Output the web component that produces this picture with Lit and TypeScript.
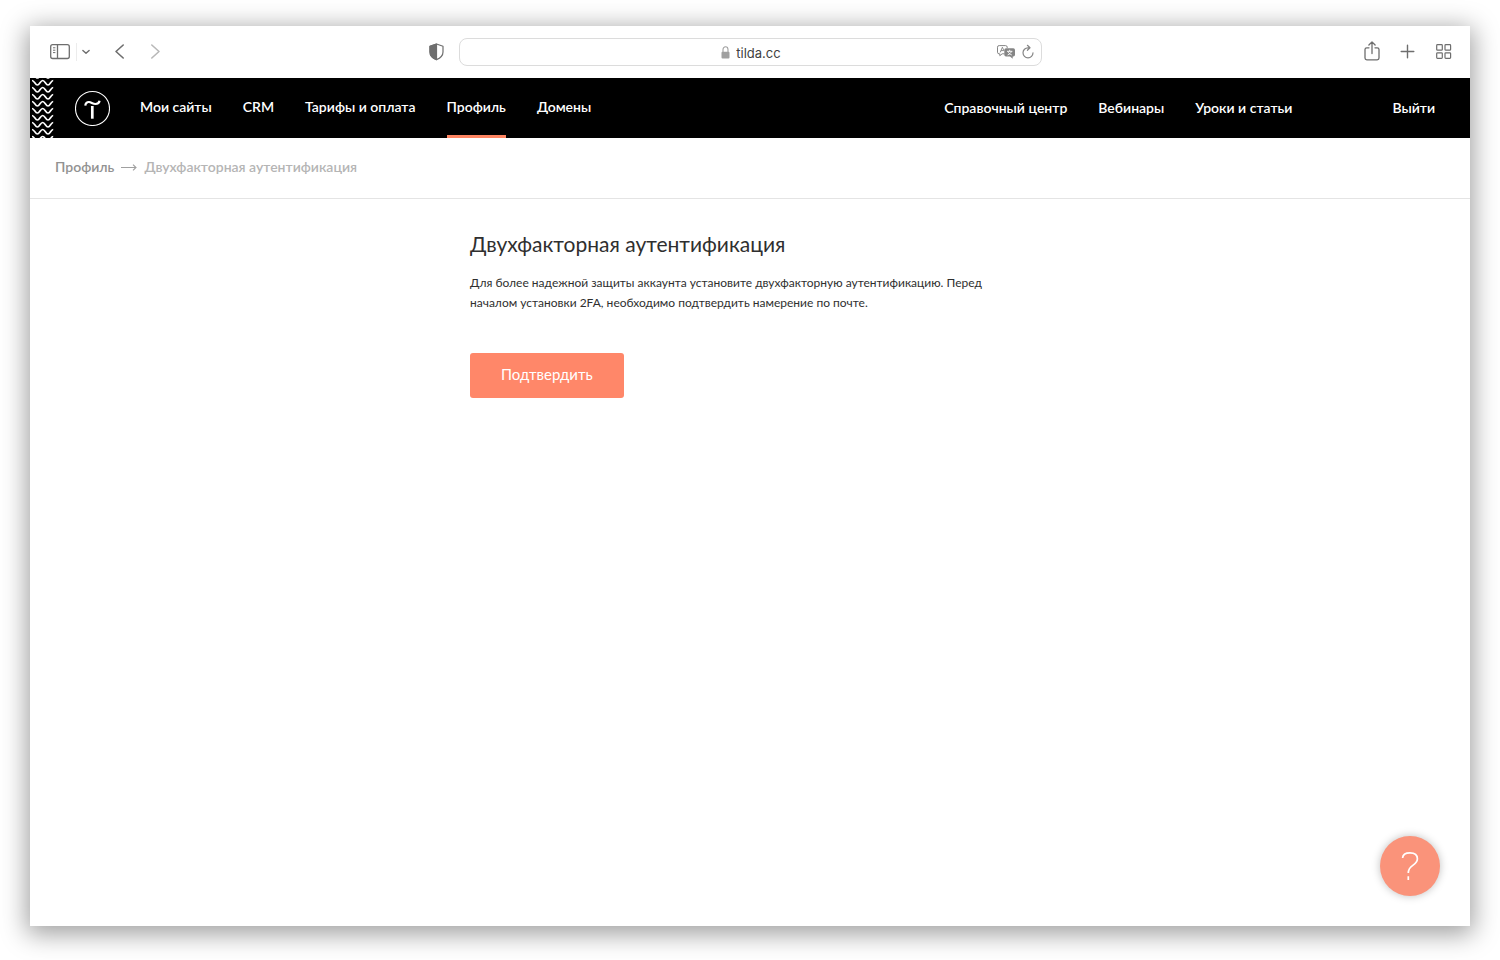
import { LitElement, html, css, svg } from "lit";
import { customElement } from "lit/decorators.js";

interface NavLink {
  label: string;
  active?: boolean;
}

const MAIN_LINKS: NavLink[] = [
  { label: "Мои сайты" },
  { label: "CRM" },
  { label: "Тарифы и оплата" },
  { label: "Профиль", active: true },
  { label: "Домены" },
];

const HELP_LINKS: NavLink[] = [
  { label: "Справочный центр" },
  { label: "Вебинары" },
  { label: "Уроки и статьи" },
];

@customElement("browser-bar")
export class BrowserBar extends LitElement {
  static styles = css`
    :host {
      display: block;
      color: #6e6e6e;
      background: #fff;
    }
    .bar {
      display: grid;
      grid-template-columns: 1fr minmax(0, 645px) 1fr;
      align-items: center;
      height: 52px;
      padding: 0 16px;
    }
    .group {
      display: flex;
      align-items: center;
    }
    .start {
      padding-left: 3px;
    }
    .end {
      justify-content: flex-end;
      gap: 16px;
    }
    .center {
      display: flex;
      align-items: center;
      gap: 13px;
      padding-right: 31px;
    }
    button {
      display: flex;
      padding: 0;
      border: 0;
      background: none;
      color: inherit;
    }
    svg {
      display: block;
      fill: none;
      stroke: currentColor;
    }
    .divider {
      width: 1px;
      height: 18px;
      margin: 0 5px;
      background: #ececec;
    }
    .back {
      margin-left: 20px;
    }
    .forward {
      margin-left: 15px;
      color: #b8b8b8;
    }
    .address {
      display: flex;
      flex: 1;
      align-items: center;
      box-sizing: border-box;
      height: 28px;
      padding: 0 6px;
      border: 1px solid #dcdcdc;
      border-radius: 8px;
    }
    .lock {
      margin-left: auto;
      color: #a0a0a0;
    }
    .url {
      field-sizing: content;
      margin: 0 auto 0 6px;
      padding: 1px 0 0;
      border: 0;
      outline: 0;
      background: none;
      color: #3f3f3f;
      font: 13px/16px Inter, sans-serif;
    }
    .spacer {
      width: 40px;
    }
    .tools {
      display: flex;
      align-items: center;
      gap: 6px;
      color: #858585;
    }
  `;

  render() {
    return html`
      <div class="bar">
        <div class="group start">
          <button aria-label="Боковая панель">
            <svg width="22" height="18" viewBox="0 0 22 18" stroke-width="1.3">
              <rect x="1.7" y="1.7" width="18.6" height="13.8" rx="2" />
              <path d="M8.500 1.700v13.800" />
              <path d="M4 4.800h2.400M4 7.200h2.400M4 9.600h2.400" stroke-width="1" />
            </svg>
          </button>
          <span class="divider"></span>
          <button aria-label="Группы вкладок">
            <svg width="8" height="8" viewBox="0 0 8 8" stroke-width="1.4" stroke-linecap="round" stroke-linejoin="round">
              <path d="M.9 2.400 4 5.300 7.100 2.400" />
            </svg>
          </button>
          <button class="back" aria-label="Назад">
            <svg width="20" height="18" viewBox="0 0 20 18" stroke-width="1.6" stroke-linecap="round" stroke-linejoin="round">
              <path d="M13.200 2 6 8.500l7.200 6.500" />
            </svg>
          </button>
          <button class="forward" aria-label="Вперёд">
            <svg width="20" height="18" viewBox="0 0 20 18" stroke-width="1.6" stroke-linecap="round" stroke-linejoin="round">
              <path d="M6.800 2 14 8.500l-7.200 6.500" />
            </svg>
          </button>
        </div>
        <div class="center">
          <button aria-label="Отчёт о конфиденциальности">
            <svg width="18" height="18" viewBox="0 0 18 18" stroke-width="1.2" stroke-linejoin="round">
              <path d="M8.500 1 15 3.300v5.600c0 3.600-2.900 6.200-6.500 7.700-3.600-1.500-6.500-4.100-6.500-7.700V3.300z" />
              <path d="M8.500 1 2 3.300v5.600c0 3.600 2.900 6.200 6.500 7.700z" fill="currentColor" />
            </svg>
          </button>
          <div class="address">
            <span class="spacer"></span>
            <svg class="lock" width="9" height="14" viewBox="0 0 9 14">
              <rect x=".5" y="6.800" width="8" height="6.700" rx="1" fill="currentColor" stroke="none" />
              <path d="M2 7V4.500a2.500 2.800 0 0 1 5 0v2.500" stroke-width="1.100" />
            </svg>
            <input class="url" type="text" aria-label="Адрес" value="tilda.cc" />
            <div class="tools">
              <button aria-label="Перевести">
                <svg width="20" height="16" viewBox="0 0 20 16" stroke-linejoin="round">
                  <path d="M8.500 9.800H6.200L3.800 11.700V9.800H3.200A1.600 1.600 0 0 1 1.500 8.200V3.200A1.600 1.600 0 0 1 3.200 1.600h6.400A1.600 1.600 0 0 1 11.200 3.200v.8" />
                  <path d="M4.200 8.400 6.400 3.200 8 7M5 6.600h2.600" stroke-width=".9" />
                  <path d="M10 4.300h7.300A1.700 1.700 0 0 1 19 6v4.800a1.700 1.700 0 0 1-1.700 1.700h-.6v2.300l-2.700-2.300h-4A1.700 1.700 0 0 1 8.300 10.800V6A1.700 1.700 0 0 1 10 4.300z" fill="currentColor" stroke="none" />
                  <path d="M11 7.300h5.400M13.700 5.800v1.500M11.600 11c2-.8 3.300-2 3.800-3.600M12 7.500c.6 1.600 1.900 2.800 3.800 3.500" stroke="#fff" stroke-width=".9" />
                </svg>
              </button>
              <button aria-label="Обновить">
                <svg width="12" height="16" viewBox="0 0 12 16" stroke-width="1.200" stroke-linecap="round" stroke-linejoin="round">
                  <path d="M6 3.800a5 5 0 1 0 5 5M6 3.800h1.800M5.400 1.300l2.600 2.500-2.600 2.500" />
                </svg>
              </button>
            </div>
          </div>
        </div>
        <div class="group end">
          <button aria-label="Поделиться">
            <svg width="20" height="22" viewBox="0 0 20 22" stroke-width="1.300" stroke-linecap="round" stroke-linejoin="round">
              <path d="M7 6.800H4.800a1.800 1.800 0 0 0-1.800 1.800v8.400a1.800 1.800 0 0 0 1.800 1.800h10.400a1.800 1.800 0 0 0 1.800-1.800V8.600a1.800 1.800 0 0 0-1.800-1.800H13M10 12.600V1M6.900 4 10 .9l3.100 3.100" />
            </svg>
          </button>
          <button aria-label="Новая вкладка">
            <svg width="20" height="20" viewBox="0 0 20 20" stroke-width="1.400" stroke-linecap="round">
              <path d="M9.500 3.200v12.600M3.200 9.500h12.600" />
            </svg>
          </button>
          <button aria-label="Обзор вкладок">
            <svg width="20" height="20" viewBox="0 0 20 20" stroke-width="1.200">
              <rect x="2.700" y="2.600" width="5.600" height="5.600" rx=".8" />
              <rect x="11" y="2.600" width="5.600" height="5.600" rx=".8" />
              <rect x="2.700" y="10.800" width="5.600" height="5.600" rx=".8" />
              <rect x="11" y="10.800" width="5.600" height="5.600" rx=".8" />
            </svg>
          </button>
        </div>
      </div>
    `;
  }
}

@customElement("site-header")
export class SiteHeader extends LitElement {
  static styles = css`
    :host {
      display: block;
      background: #000;
      color: #fff;
    }
    .header {
      display: flex;
      align-items: stretch;
      height: 60px;
      padding-right: 35px;
      font-size: 14px;
      line-height: 20px;
      font-weight: 600;
      white-space: nowrap;
    }
    svg {
      display: block;
      fill: none;
      stroke: #fff;
    }
    .pattern {
      flex: none;
    }
    .logo {
      display: flex;
      align-items: center;
      margin: 0 30px 0 21px;
    }
    nav {
      display: flex;
      gap: 31px;
    }
    a {
      color: inherit;
      text-decoration: none;
    }
    .main a {
      box-sizing: border-box;
      height: 60px;
      padding-top: 19px;
      border-bottom: 3px solid transparent;
    }
    .main a.active {
      border-bottom-color: #ff8562;
    }
    .help {
      margin-left: auto;
    }
    .help a,
    .exit {
      padding-top: 20px;
    }
    .exit {
      margin-left: 100px;
    }
  `;

  private wave(y: number) {
    return svg`<path
      transform="translate(0 ${y})"
      d="M2 .5C4.300 .5 5.200 5 7.400 5S10.400 .5 12.700 .5 15.700 5 18 5 20.900 .5 23.200 .5"
    />`;
  }

  render() {
    const rows = Array.from({ length: 10 }, (_, i) => i * 7 - 5);
    return html`
      <header class="header">
        <svg class="pattern" width="24" height="60" viewBox="0 0 24 60" stroke-width="1.700">
          ${rows.map((y) => this.wave(y))}
        </svg>
        <a class="logo" href="#" aria-label="Tilda">
          <svg width="35" height="36" viewBox="0 0 35 36">
            <circle cx="17.500" cy="18.500" r="17" stroke-width="1.100" />
            <path d="M17.300 16v12.700" stroke-width="2.700" />
            <path d="M10.300 15.600c.2-2.400 1.800-3.800 3.700-3.600 2.300.3 3.900 2 6.500 2 2.300 0 3.700-1 4.100-3.200" stroke-width="2.200" />
          </svg>
        </a>
        <nav class="main">
          ${MAIN_LINKS.map((l) => html`<a href="#" class=${l.active ? "active" : ""}>${l.label}</a>`)}
        </nav>
        <nav class="help">
          ${HELP_LINKS.map((l) => html`<a href="#">${l.label}</a>`)}
        </nav>
        <a class="exit" href="#">Выйти</a>
      </header>
    `;
  }
}

@customElement("app-root")
export class AppRoot extends LitElement {
  static styles = css`
    :host {
      display: block;
      background: #fff;
      color: #2f2f2f;
      font-family: Lato, "Open Sans", sans-serif;
    }
    .stage {
      display: flex;
      box-sizing: border-box;
      min-height: 100vh;
      padding: 26px 30px 34px;
      overflow: hidden;
    }
    .window {
      position: relative;
      flex: 1;
      min-width: 0;
      background: #fff;
      box-shadow: 0 5px 24px 3px rgba(0, 0, 0, 0.38);
    }
    .crumbs {
      display: flex;
      align-items: center;
      gap: 7px;
      box-sizing: border-box;
      height: 61px;
      padding: 0 25px 2px;
      border-bottom: 1px solid #e4e4e4;
      color: #b5b5b5;
      font-size: 14px;
      line-height: 20px;
      font-weight: 600;
    }
    .crumbs a {
      color: #929292;
      text-decoration: none;
    }
    .crumbs svg {
      fill: none;
      stroke: #a0a0a0;
    }
    main {
      max-width: 560px;
      margin: 0 auto;
      padding: 29px 0 40px;
    }
    h1 {
      margin: 0 0 13px;
      font-size: 21px;
      line-height: 32px;
      font-weight: 400;
    }
    p {
      max-width: 540px;
      margin: 0 0 40px;
      font-size: 12px;
      line-height: 20px;
    }
    .confirm {
      height: 45px;
      padding: 0 31px 3px;
      border: 0;
      border-radius: 3px;
      background: #ff8769;
      color: #fff;
      font: inherit;
      font-size: 15px;
      line-height: 22px;
    }
    .ask {
      position: absolute;
      right: 30px;
      bottom: 30px;
      display: grid;
      place-items: center;
      width: 60px;
      height: 60px;
      padding: 0;
      border: 0;
      border-radius: 50%;
      background: #fa937a;
      box-shadow: 0 0 8px rgba(0, 0, 0, 0.25);
    }
    .ask svg {
      fill: none;
      stroke: #fff;
    }
  `;

  render() {
    return html`
      <div class="stage">
        <div class="window">
          <browser-bar></browser-bar>
          <site-header></site-header>
          <nav class="crumbs" aria-label="Навигация">
            <a href="#">Профиль</a>
            <svg width="16" height="10" viewBox="0 0 16 10" stroke-width="1.100">
              <path d="M0 5.500h15M12 2.700l3 2.800-3 2.800" />
            </svg>
            <span>Двухфакторная аутентификация</span>
          </nav>
          <main>
            <h1>Двухфакторная аутентификация</h1>
            <p>
              Для более надежной защиты аккаунта установите двухфакторную аутентификацию. Перед
              началом установки 2FA, необходимо подтвердить намерение по почте.
            </p>
            <button class="confirm">Подтвердить</button>
          </main>
          <button class="ask" aria-label="Помощь">
            <svg width="20" height="30" viewBox="0 0 20 30" stroke-width="1.700">
              <path d="M2.600 7C2.800 3.700 5.700 1.800 10 1.800c4.800 0 7.400 2.300 7.400 6 0 3.300-2 4.800-4.600 6.600-3 2-4.500 3.600-4.500 7.600M8.300 25.300v3.600" />
            </svg>
          </button>
        </div>
      </div>
    `;
  }
}
